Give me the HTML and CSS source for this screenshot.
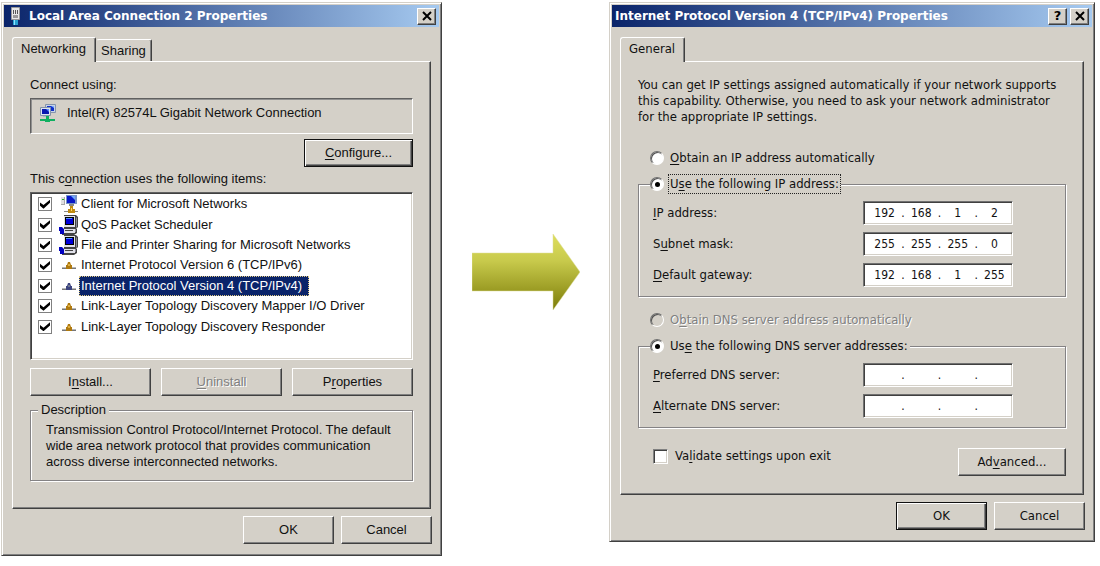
FILE: index.html
```html
<!DOCTYPE html>
<html lang="en">
<head>
    <meta charset="UTF-8">
    <meta name="viewport" content="width=device-width, initial-scale=1.0">
    <title>Network connection properties</title>
    <link rel="stylesheet" href="styles.css">
</head>
<body>
    <!-- icons used more than once -->
    <svg class="sprite" aria-hidden="true">
        <symbol id="computer" viewBox="0 0 20 20">
            <path fill="#444" d="M5 0h12l2 2v10l-2 2h1v4l-3 2H3v-5h2z"/>
            <path fill="#e0e0e8" d="M5 1h11v11H5zM4 14h12v4H4z"/>
            <path fill="#8c8c98" d="M17 2l1 1v9l-1 1zM16 14h1v3h-1z"/>
            <path fill="#000" d="M6 2h9v8H6z"/>
            <path fill="#0000d8" d="M7 3h7v6H7z"/>
            <path fill="#4a8cff" d="M7 3h6v1H7z"/>
            <path fill="#444" d="M6 15h8v1H6z"/>
            <path fill="#0000c0" d="M0 12h3l2 2v5H1V16H0z"/>
        </symbol>
        <symbol id="protocol" viewBox="0 0 20 20">
            <path fill="#777" d="M3 12h14v2H3z"/>
            <path fill="#b8b8b8" d="M3 12h14v1H3z"/>
            <path fill="var(--node, #b07a10)" d="M8 10l1-3h2l1 3h1v4H7v-4z"/>
            <path fill="var(--shine, #e0b040)" d="M9 9h2v2H9z"/>
        </symbol>
        <symbol id="close" viewBox="0 0 10 10">
            <path fill="none" stroke="#000" stroke-width="2" d="M1 1l8 8M9 1L1 9"/>
        </symbol>
    </svg>

    <main class="steps">
        <section class="dialog">
            <header class="titlebar">
                <svg class="title-icon" width="16" height="20" viewBox="0 0 16 20" aria-hidden="true">
                    <path fill="#e8e8e8" stroke="#999" d="M4.500 1.500h8v12h-8z"/>
                    <path fill="#555" d="M6 4h1v4H6zM8 4h1v4H8zM10 4h1v4h-1z"/>
                    <path fill="#999" d="M6 9h5v3H6z"/>
                    <path fill="#28a0d0" d="M6 14h5v5H6z"/>
                    <path fill="#90e0ff" d="M7 14h1v5H7z"/>
                </svg>
                <h1>Local Area Connection 2 Properties</h1>
                <button class="title-button" aria-label="Close"><svg width="10" height="10"><use href="#close"/></svg></button>
            </header>
            <div class="tabs" role="tablist">
                <button class="tab active" role="tab">Networking</button>
                <button class="tab" role="tab">Sharing</button>
            </div>
            <div class="panel networking">
                <p>Connect using:</p>
                <div class="adapter">
                    <svg width="20" height="20" viewBox="0 0 20 20" aria-hidden="true">
                        <path fill="#c8d4e8" stroke="#8494ac" d="M7.500 1.500h10v8h-10z"/>
                        <path fill="#1030c8" d="M9 3h7v5H9z"/>
                        <path fill="#80b0ff" d="M13 3h3v2z"/>
                        <path fill="#dce4f0" stroke="#8494ac" d="M2.500 4.500h10v8h-10z"/>
                        <path fill="#0818b0" d="M4 6h7v5H4z"/>
                        <path fill="#5c90ff" d="M8 6h3v3z"/>
                        <path fill="#a8b8c8" d="M5 13h6v1H5z"/>
                        <path fill="#10b060" d="M8 13h3v3h6v2h-5v1H7v-1H2v-2h6z"/>
                    </svg>
                    <span>Intel(R) 82574L Gigabit Network Connection</span>
                </div>
                <button class="button default configure"><u>C</u>onfigure...</button>
                <p>This c<u>o</u>nnection uses the following items:</p>
                <div class="items">
                    <label class="item">
                        <input type="checkbox" checked>
                        <svg width="20" height="20" viewBox="0 0 20 20" aria-hidden="true">
                            <path fill="#a8a8a8" d="M2 3h4v8H2z"/>
                            <path fill="#e0e0e0" d="M2 3h3v7H2z"/>
                            <path fill="#20b020" d="M3 5h2v1H3z"/>
                            <path fill="#7894c8" d="M7 1h11v9H7z"/>
                            <path fill="#0818c8" d="M8 2h8v7H8z"/>
                            <path fill="#70a8ff" d="M12 2h4v4z"/>
                            <path fill="#888" d="M10 10h5v2h-5zM5 17h14v1H5z"/>
                            <path fill="#c08a10" d="M11 12h3v3h2v4H9v-4h2z"/>
                            <path fill="#ffd860" d="M12 14h1v3h-1z"/>
                        </svg>
                        <span>Client for Microsoft Networks</span>
                    </label>
                    <label class="item">
                        <input type="checkbox" checked>
                        <svg width="20" height="20" aria-hidden="true"><use href="#computer"/></svg>
                        <span>QoS Packet Scheduler</span>
                    </label>
                    <label class="item">
                        <input type="checkbox" checked>
                        <svg width="20" height="20" aria-hidden="true"><use href="#computer"/></svg>
                        <span>File and Printer Sharing for Microsoft Networks</span>
                    </label>
                    <label class="item">
                        <input type="checkbox" checked>
                        <svg width="20" height="20" aria-hidden="true"><use href="#protocol"/></svg>
                        <span>Internet Protocol Version 6 (TCP/IPv6)</span>
                    </label>
                    <label class="item selected">
                        <input type="checkbox" checked>
                        <svg width="20" height="20" aria-hidden="true"><use href="#protocol"/></svg>
                        <span>Internet Protocol Version 4 (TCP/IPv4)</span>
                    </label>
                    <label class="item">
                        <input type="checkbox" checked>
                        <svg width="20" height="20" aria-hidden="true"><use href="#protocol"/></svg>
                        <span>Link-Layer Topology Discovery Mapper I/O Driver</span>
                    </label>
                    <label class="item">
                        <input type="checkbox" checked>
                        <svg width="20" height="20" aria-hidden="true"><use href="#protocol"/></svg>
                        <span>Link-Layer Topology Discovery Responder</span>
                    </label>
                </div>
                <div class="item-actions">
                    <button class="button">I<u>n</u>stall...</button>
                    <button class="button" disabled><u>U</u>ninstall</button>
                    <button class="button">P<u>r</u>operties</button>
                </div>
                <fieldset class="group description">
                    <legend>Description</legend>
                    <p>Transmission Control Protocol/Internet Protocol. The default<br>
                    wide area network protocol that provides communication<br>
                    across diverse interconnected networks.</p>
                </fieldset>
            </div>
            <footer class="dialog-actions">
                <button class="button">OK</button>
                <button class="button">Cancel</button>
            </footer>
        </section>

        <svg class="arrow" width="108" height="76" viewBox="0 0 108 76" aria-hidden="true">
            <defs>
                <linearGradient id="olive" x1="0" y1="0" x2="0" y2="1">
                    <stop offset="0" stop-color="#dede5c"/>
                    <stop offset="0.350" stop-color="#c8ca4c"/>
                    <stop offset="1" stop-color="#7c7c08"/>
                </linearGradient>
            </defs>
            <path fill="url(#olive)" stroke="#dcdc98" stroke-width="0.500" d="M0 19h81V0l27 38-27 38V57H0z"/>
        </svg>

        <section class="dialog ip-dialog">
            <header class="titlebar">
                <h1>Internet Protocol Version 4 (TCP/IPv4) Properties</h1>
                <button class="title-button help">?</button>
                <button class="title-button" aria-label="Close"><svg width="10" height="10"><use href="#close"/></svg></button>
            </header>
            <div class="tabs" role="tablist">
                <button class="tab active" role="tab">General</button>
            </div>
            <div class="panel general">
                <p>You can get IP settings assigned automatically if your network supports<br>
                this capability. Otherwise, you need to ask your network administrator<br>
                for the appropriate IP settings.</p>
                <label class="choice auto-ip"><input type="radio" name="ip"><span><u>O</u>btain an IP address automatically</span></label>
                <fieldset class="group addresses">
                    <legend><label class="choice focused"><input type="radio" name="ip" checked><span>U<u>s</u>e the following IP address:</span></label></legend>
                    <div class="field">
                        <label for="ip1"><u>I</u>P address:</label>
                        <div class="octets">
                            <input id="ip1" type="text" value="192">.<input type="text" value="168" aria-label="IP address, part 2">.<input type="text" value="1" aria-label="IP address, part 3">.<input type="text" value="2" aria-label="IP address, part 4">
                        </div>
                    </div>
                    <div class="field">
                        <label for="mask1">S<u>u</u>bnet mask:</label>
                        <div class="octets">
                            <input id="mask1" type="text" value="255">.<input type="text" value="255" aria-label="Subnet mask, part 2">.<input type="text" value="255" aria-label="Subnet mask, part 3">.<input type="text" value="0" aria-label="Subnet mask, part 4">
                        </div>
                    </div>
                    <div class="field">
                        <label for="gateway1"><u>D</u>efault gateway:</label>
                        <div class="octets">
                            <input id="gateway1" type="text" value="192">.<input type="text" value="168" aria-label="Default gateway, part 2">.<input type="text" value="1" aria-label="Default gateway, part 3">.<input type="text" value="255" aria-label="Default gateway, part 4">
                        </div>
                    </div>
                </fieldset>
                <label class="choice auto-dns"><input type="radio" name="dns" disabled><span>O<u>b</u>tain DNS server address automatically</span></label>
                <fieldset class="group addresses">
                    <legend><label class="choice"><input type="radio" name="dns" checked><span>Us<u>e</u> the following DNS server addresses:</span></label></legend>
                    <div class="field">
                        <label for="dns1"><u>P</u>referred DNS server:</label>
                        <div class="octets">
                            <input id="dns1" type="text">.<input type="text" aria-label="Preferred DNS, part 2">.<input type="text" aria-label="Preferred DNS, part 3">.<input type="text" aria-label="Preferred DNS, part 4">
                        </div>
                    </div>
                    <div class="field">
                        <label for="alt1"><u>A</u>lternate DNS server:</label>
                        <div class="octets">
                            <input id="alt1" type="text">.<input type="text" aria-label="Alternate DNS, part 2">.<input type="text" aria-label="Alternate DNS, part 3">.<input type="text" aria-label="Alternate DNS, part 4">
                        </div>
                    </div>
                </fieldset>
                <div class="extras">
                    <label class="validate"><input type="checkbox"><span>Va<u>l</u>idate settings upon exit</span></label>
                    <button class="button">Ad<u>v</u>anced...</button>
                </div>
            </div>
            <footer class="dialog-actions">
                <button class="button default">OK</button>
                <button class="button">Cancel</button>
            </footer>
        </section>
    </main>
</body>
</html>
```

FILE: styles.css
```css
*{
    box-sizing: border-box;
}
body{
    margin: 2px 5px 10px 1px;
    background: #fff;
    color: #111;
    font-family: "Liberation Sans", sans-serif;
    font-size: 13px;
    line-height: 16px;
}
h1, p, fieldset{
    margin: 0;
}
button, input{
    font: inherit;
    color: inherit;
    margin: 0;
    padding: 0;
}
u{
    text-underline-offset: 2px;
}
.sprite{
    display: none;
}

/* two dialogs with the arrow between them */
.steps{
    display: grid;
    grid-template-columns: 441fr 167px 486fr;
    align-items: start;
}
.arrow{
    justify-self: center;
    align-self: center;
    margin-bottom: 15px;
}

/* dialog frame */
.dialog{
    background: #d4d0c8;
    border: 1px solid;
    border-color: #d4d0c8 #404040 #404040 #d4d0c8;
    box-shadow: inset 1px 1px 0 #fff, inset -1px -1px 0 #808080;
    padding: 2px 2px 11px;
}
.ip-dialog{
    font-family: "DejaVu Sans Condensed", sans-serif;
}
.titlebar{
    display: flex;
    align-items: center;
    gap: 3px;
    height: 22px;
    padding: 0 3px;
    color: #fff;
    background: linear-gradient(to right, #0a246a, #a6caf0);
}
.title-icon{
    margin-right: 3px;
}
.titlebar h1{
    flex: 1;
    font-family: "DejaVu Sans", sans-serif;
    font-size: 12px;
    white-space: nowrap;
}
.title-button{
    display: flex;
    align-items: center;
    justify-content: center;
    width: 19px;
    height: 17px;
    color: #000;
    background: #d4d0c8;
    border: 1px solid;
    border-color: #fff #404040 #404040 #fff;
    box-shadow: inset -1px -1px 0 #808080;
}
.help{
    font-family: "DejaVu Sans", sans-serif;
    font-weight: bold;
}

/* tabs */
.tabs{
    display: flex;
    align-items: flex-end;
    height: 34px;
    padding: 0 8px;
}
.tab{
    height: 22px;
    padding: 0 5px 0 4px;
    background: #d4d0c8;
    border: 1px solid;
    border-color: #fff #404040 transparent #d4d0c8;
    border-bottom: 0;
    border-radius: 3px 2px 0 0;
    box-shadow: inset -1px 0 0 #808080;
}
.tab.active{
    position: relative;
    height: 25px;
    margin-bottom: -1px;
    padding: 0 9px 2px 8px;
    border-left-color: #fff;
}
.panel{
    margin: 0 8px;
    border: 1px solid;
    border-color: #fff #404040 #404040 #fff;
    box-shadow: inset -1px -1px 0 #808080;
}
.networking{
    padding: 15px 17px 27px;
}
.general{
    padding: 15px 17px 18px;
}

/* buttons */
.button{
    height: 28px;
    background: #d4d0c8;
    border: 1px solid;
    border-color: #fff #404040 #404040 #fff;
    box-shadow: inset -1px -1px 0 #808080;
}
.button:disabled{
    color: #808080;
    text-shadow: 1px 1px 0 #fff;
}
.button.default{
    border-color: #111;
    box-shadow: inset 1px 1px 0 #fff, inset -1px -1px 0 #404040, inset -2px -2px 0 #808080;
}
.dialog-actions{
    display: flex;
    justify-content: flex-end;
    gap: 7px;
    padding: 7px 7px 0;
}
.dialog-actions .button{
    width: 91px;
}

/* adapter and its items */
.adapter{
    display: flex;
    align-items: center;
    gap: 9px;
    height: 36px;
    margin: 5px 0;
    padding: 0 7px 6px;
    border: 1px solid;
    border-color: #606060 #fff #fff #606060;
    box-shadow: inset 1px 1px 0 #909090;
}
.configure{
    display: block;
    width: 109px;
    margin: 0 0 4px auto;
}
.items{
    display: grid;
    grid-template-rows: repeat(7, 1fr);
    height: 168px;
    margin: 5px 0 8px;
    padding: 1px 7px 22px;
    background: #fff;
    border: 1px solid;
    border-color: #606060 #fff #fff #606060;
    box-shadow: inset 1px 1px 0 #404040, inset -1px -1px 0 #d4d0c8;
}
.item{
    display: flex;
    align-items: center;
}
.item svg{
    margin-left: 7px;
}
.item span{
    padding: 2px;
}
.selected{
    --node: #3c4480;
    --shine: #707890;
}
.selected span{
    padding: 1px 6px 1px 1px;
    color: #fff;
    background: #0a246a;
    border: 1px dotted #e0c880;
}
.item-actions{
    display: grid;
    grid-template-columns: repeat(3, 1fr);
    gap: 10px;
    margin-bottom: 6px;
}

/* tick boxes and radios */
input[type="checkbox"]{
    appearance: none;
    display: grid;
    place-items: center;
    width: 14px;
    height: 14px;
    background: #fff;
    border: 1px solid #808080;
}
input[type="checkbox"]:checked::before{
    content: "";
    width: 10px;
    height: 9px;
    background: #000;
    clip-path: polygon(0 30%, 35% 60%, 100% 0, 100% 35%, 35% 100%, 0 68%);
}
.validate input[type="checkbox"]{
    width: 15px;
    height: 15px;
    border-color: #808080 #fff #fff #808080;
    box-shadow: inset 1px 1px 0 #404040, inset -1px -1px 0 #d4d0c8;
}
input[type="radio"]{
    appearance: none;
    display: grid;
    place-items: center;
    width: 14px;
    height: 14px;
    background: #fff;
    border: 1px solid;
    border-color: #707070 #fff #fff #707070;
    border-radius: 50%;
    box-shadow: inset 1px 1px 0 #505050;
}
input[type="radio"]:checked::before{
    content: "";
    width: 5px;
    height: 5px;
    background: #000;
    border-radius: 50%;
}
input[type="radio"]:disabled{
    background: #d4d0c8;
}
input:disabled + span{
    color: #808080;
    text-shadow: 1px 1px 0 #fff;
}
.choice{
    display: flex;
    align-items: center;
    gap: 4px;
    height: 22px;
}
.choice span{
    padding: 1px;
    border: 1px solid transparent;
}
.focused span{
    border: 1px dotted #222;
}

/* group boxes */
.group{
    min-width: 0;
    padding: 0;
    border: 1px solid #848284;
    box-shadow: 1px 1px 0 #fff, inset 1px 1px 0 #fff;
}
.group legend{
    background: #d4d0c8;
    padding: 0;
}
.description{
    padding: 4px 15px 10px;
}
.description legend{
    margin-left: -8px;
    padding: 0 3px;
}
.auto-ip{
    margin: 22px 0 4px 12px;
}
.auto-dns{
    margin: 12px 0 4px 12px;
}
.addresses{
    padding: 0 52px 9px 14px;
}
.addresses legend{
    margin-left: -3px;
}
.field{
    display: flex;
    align-items: center;
    justify-content: space-between;
    height: 24px;
    margin-top: 7px;
}
.addresses legend + .field{
    margin-top: 6px;
}
.octets{
    display: flex;
    align-items: center;
    width: 150px;
    height: 24px;
    padding: 0 1px 0 4px;
    font-size: 12px;
    background: #fff;
    border: 1px solid;
    border-color: #707070 #fff #fff #707070;
    box-shadow: inset 1px 1px 0 #404040, inset -1px -1px 0 #d4d0c8;
}
.octets input{
    flex: 1;
    min-width: 0;
    height: 18px;
    text-align: center;
    background: transparent;
    border: 0;
    outline: 0;
}
.extras{
    display: flex;
    justify-content: space-between;
    margin-top: 20px;
}
.validate{
    display: flex;
    align-items: center;
    gap: 7px;
    height: 16px;
    margin-left: 15px;
}
.extras .button{
    width: 108px;
}
```
